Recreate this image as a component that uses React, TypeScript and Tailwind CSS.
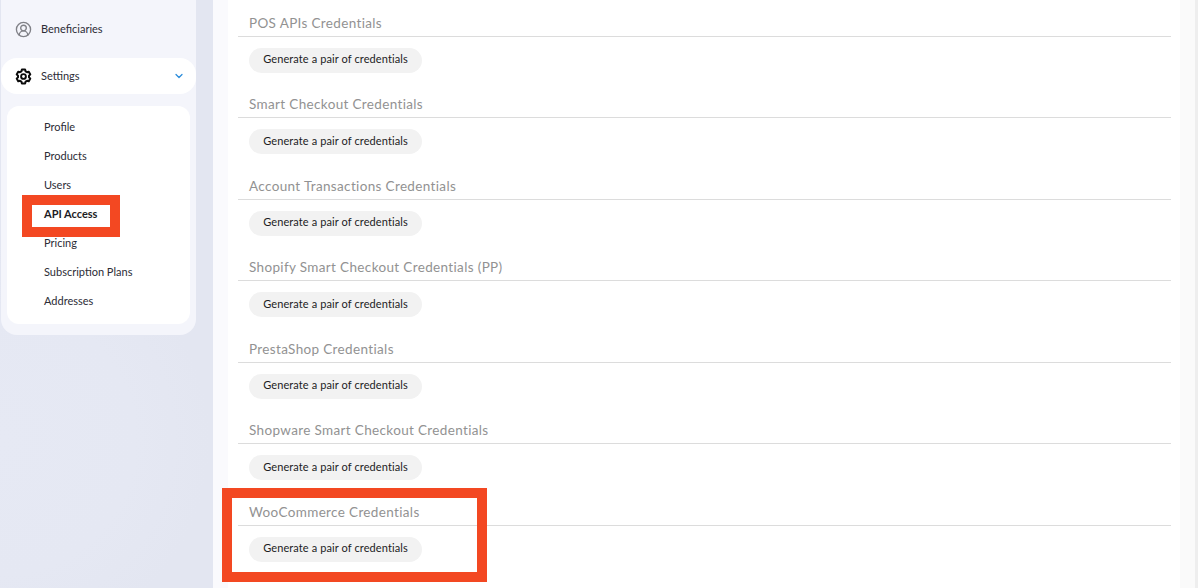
import { ChevronDown, CircleUserRound } from "lucide-react";

const SUB_ITEMS = ["Profile", "Products", "Users", "API Access", "Pricing", "Subscription Plans", "Addresses"];

const SECTIONS = [
  "POS APIs Credentials",
  "Smart Checkout Credentials",
  "Account Transactions Credentials",
  "Shopify Smart Checkout Credentials (PP)",
  "PrestaShop Credentials",
  "Shopware Smart Checkout Credentials",
  "WooCommerce Credentials",
];

const GearIcon = () => (
  <svg width="17" height="17" viewBox="0 0 17 17" fill="none" className="shrink-0">
    <path
      d="M6.9 1.6h3.2l.5 1.8 1.4.8 1.8-.5 1.5 2.7-1.3 1.3v1.6l1.3 1.3-1.5 2.7-1.8-.5-1.4.8-.5 1.8H6.9l-.5-1.8-1.4-.8-1.8.5-1.5-2.7 1.3-1.3V7.7L1.7 6.4l1.5-2.7 1.8.5 1.4-.8z"
      stroke="#0c0c0c"
      strokeWidth="2"
      strokeLinejoin="round"
    />
    <circle cx="8.5" cy="8.5" r="2.4" stroke="#0c0c0c" strokeWidth="1.9" />
  </svg>
);

const Section = ({ title }: { title: string }) => (
  <div className="h-[81.5px]">
    <h3 className="h-[24px] border-b border-[#dcdcdc] pl-[11px] text-[13.5px] leading-[20px] tracking-[0.35px] text-[#929292]">
      {title}
    </h3>
    <button className="ml-[11px] mt-[11px] h-[25px] w-[173px] rounded-full bg-[#f2f2f2] pb-[1px] text-center text-[11px] tracking-[0.1px] text-[#1c1c24]">
      Generate a pair of credentials
    </button>
  </div>
);

const Sidebar = () => (
  <aside className="h-full w-[213px] shrink-0 bg-[#e4e7f2] bg-[radial-gradient(circle_at_0px_440px,#e6e9f4_0,#e5e8f3_135px,#e3e6f1_210px)] pl-[1px]">
    <div className="h-[335px] w-[195px] rounded-b-2xl bg-[#f4f5fb]">
      <div className="flex h-[58px] items-center pl-[14px] text-[11px] text-[#2c2c36]">
        <CircleUserRound size={17} strokeWidth={1.9} className="text-[#808187]" />
        <span className="ml-[9px]">Beneficiaries</span>
      </div>
      <div className="flex h-[36px] items-center rounded-2xl bg-white pl-[14px] pr-[11px] text-[11px] text-[#2c2c36]">
        <GearIcon />
        <span className="ml-[9px]">Settings</span>
        <ChevronDown size={12} strokeWidth={2.5} className="ml-auto text-[#2b8cdb]" />
      </div>
      <ul className="ml-[6px] mt-[12px] h-[218px] w-[183px] rounded-xl bg-white pl-[37px] pt-[7px] text-[11px] text-[#2c2c36]">
        {SUB_ITEMS.map((item) => (
          <li
            key={item}
            className={`flex h-[29px] items-center ${item === "API Access" ? "font-bold text-[#1c1c24]" : ""}`}
          >
            {item}
          </li>
        ))}
      </ul>
    </div>
  </aside>
);

export default function App() {
  return (
    <div className="relative flex h-[588px] w-[1198px] overflow-hidden bg-white font-['Lato',sans-serif]">
      <Sidebar />
      <main className="flex-1 bg-[#fafafd] pl-[15px]">
        <div className="flex h-full">
          <div className="h-full w-[952px] bg-white pl-[10px] pr-[9px] pt-[12.5px]">
            {SECTIONS.map((title) => (
              <Section key={title} title={title} />
            ))}
          </div>
          <div className="h-full flex-1 border-r-[3px] border-[#eeeeee] bg-[#fafafa]" />
        </div>
      </main>
      {/* red annotation boxes */}
      <div className="absolute left-[22px] top-[195px] h-[42px] w-[98px] border-[10px] border-[#f34822]" />
      <div className="absolute left-[222px] top-[488px] h-[94px] w-[265px] border-[10px] border-[#f34822]" />
    </div>
  );
}
